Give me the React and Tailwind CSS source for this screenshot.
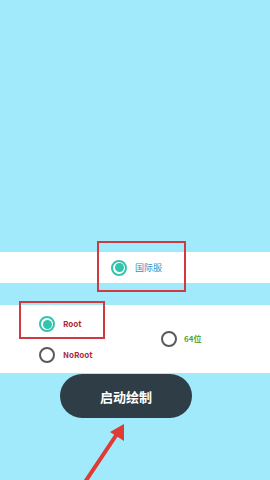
export default function App() {
  const font = { fontFamily: '"Noto Sans CJK SC", "Noto Sans", sans-serif' };
  return (
    <div className="relative h-[480px] w-[270px] overflow-hidden bg-[#a0eafb] flex flex-col" style={font}>
      <div className="h-[252px] shrink-0" />
      <div className="h-[31px] shrink-0 bg-white flex items-center pl-[111px] gap-[8px]">
        <span className="w-[16px] h-[16px] rounded-full border-2 border-[#33c4ad] flex items-center justify-center">
          <span className="w-[9px] h-[9px] rounded-full bg-[#33c4ad]" />
        </span>
        <span className="text-[9px] leading-none text-[#3b8fc4]">国际服</span>
      </div>
      <div className="h-[22px] shrink-0" />
      <div className="h-[68px] shrink-0 bg-white relative">
        <div className="absolute left-[39px] top-[11px] flex items-center gap-[8px]">
          <span className="w-[16px] h-[16px] rounded-full border-2 border-[#33c4ad] flex items-center justify-center">
            <span className="w-[9px] h-[9px] rounded-full bg-[#33c4ad]" />
          </span>
          <span className="text-[8px] font-bold leading-none text-[#a8283a]">Root</span>
        </div>
        <div className="absolute left-[39px] top-[42px] flex items-center gap-[8px]">
          <span className="w-[16px] h-[16px] rounded-full border-2 border-[#5a5a5a]" />
          <span className="text-[8px] font-bold leading-none text-[#a8283a]">NoRoot</span>
        </div>
        <div className="absolute left-[161px] top-[26px] flex items-center gap-[7px]">
          <span className="w-[16px] h-[16px] rounded-full border-2 border-[#5a5a5a]" />
          <span className="text-[8px] font-bold leading-none text-[#58a83a]">64位</span>
        </div>
      </div>
      <div className="flex-1 pl-[60px] pt-[1px]">
        <div className="w-[132px] h-[44px] rounded-full bg-[#2f3e46] flex items-center justify-center">
          <span className="text-[13px] font-bold text-white leading-none">启动绘制</span>
        </div>
      </div>

      {/* annotation boxes */}
      <div className="absolute left-[97px] top-[241px] w-[89px] h-[51px] border-2 border-[#cf3a42]" />
      <div className="absolute left-[19px] top-[301px] w-[86px] h-[38px] border-2 border-[#cf3a42]" />

      {/* annotation arrow */}
      <svg className="absolute left-0 top-0" width="270" height="480" viewBox="0 0 270 480">
        <line x1="85" y1="482" x2="117" y2="434" stroke="#e03a34" strokeWidth="4" strokeLinecap="round" />
        <polygon points="124,424 124,441 110,432" fill="#e03a34" />
      </svg>
    </div>
  );
}
